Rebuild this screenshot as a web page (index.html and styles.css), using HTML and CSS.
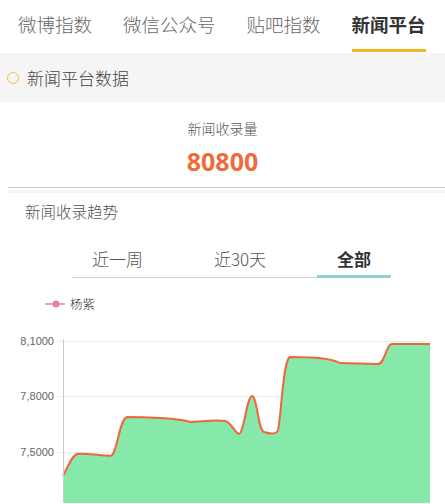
FILE: index.html
```html
<!DOCTYPE html>
<html lang="zh">
<head>
<meta charset="utf-8">
<title>新闻平台</title>
<link rel="stylesheet" href="styles.css">
</head>
<body>
<nav class="tabs">
  <span class="tab">微博指数</span>
  <span class="tab">微信公众号</span>
  <span class="tab">贴吧指数</span>
  <span class="tab active">新闻平台</span>
</nav>
<div class="section-head">
  <span class="ring"></span>
  <span class="section-title">新闻平台数据</span>
</div>
<div class="summary">
  <div class="summary-label">新闻收录量</div>
  <div class="summary-value">80800</div>
</div>
<div class="divider"></div>
<div class="trend-title">新闻收录趋势</div>
<div class="range-tabs">
  <span class="range">近一周</span>
  <span class="range">近30天</span>
  <span class="range active">全部</span>
</div>
<div class="legend">
  <svg class="legend-mark" width="20" height="10" viewBox="0 0 20 10"><line x1="0" y1="5" x2="20" y2="5" stroke="#ec7fa0" stroke-width="1.5"/><circle cx="11" cy="5" r="3.5" fill="#ec7fa0"/></svg>
  <span class="legend-text">杨紫</span>
</div>
<svg class="chart" width="445" height="174" viewBox="0 0 445 174">
  <g stroke="#ececec" stroke-width="1">
    <line x1="57" y1="12.5" x2="430" y2="12.5"/>
    <line x1="57" y1="67.5" x2="430" y2="67.5"/>
    <line x1="57" y1="123.5" x2="430" y2="123.5"/>
  </g>
  <g class="axis-label" font-size="11" fill="#666" text-anchor="end">
    <text x="54" y="16">8,1000</text>
    <text x="54" y="71">7,8000</text>
    <text x="54" y="127">7,5000</text>
  </g>
  <path fill="#86e9a9" d="M63,147 C68,137 72,127 77,125 C85,124 100,126 110,127 C117,128 119,90 127,88 C140,88 180,89 190,93 C200,93 215,90 225,92 C231,93 235,104 239,105 C244,104 247,67 252,67 C257,67 258,101 264,103 C270,105 276,106 278,101 C281,90 283,30 290,28 C300,28 330,28 340,34 C350,34 370,35 378,35 C385,35 386,15 392,15 L430,15 L430,174 L63,174 Z"/>
  <path fill="none" stroke="#f0663c" stroke-width="2" d="M63,147 C68,137 72,127 77,125 C85,124 100,126 110,127 C117,128 119,90 127,88 C140,88 180,89 190,93 C200,93 215,90 225,92 C231,93 235,104 239,105 C244,104 247,67 252,67 C257,67 258,101 264,103 C270,105 276,106 278,101 C281,90 283,30 290,28 C300,28 330,28 340,34 C350,34 370,35 378,35 C385,35 386,15 392,15 L430,15"/>
  <line x1="63.5" y1="10" x2="63.5" y2="174" stroke="#cccccc" stroke-width="1"/>
</svg>
</body>
</html>
```

FILE: styles.css
```css
html, body {
  margin: 0;
  padding: 0;
  background: #ffffff;
}
body {
  width: 445px;
  height: 504px;
  overflow: hidden;
  font-family: "Noto Sans CJK SC", "Noto Sans", sans-serif;
  font-weight: 300;
  color: #555;
}
.tabs {
  display: flex;
  gap: 31px;
  padding-left: 18px;
  height: 53px;
  box-sizing: border-box;
}
.tab {
  font-size: 18.5px;
  line-height: 49px;
  height: 49px;
  color: #666;
  border-bottom: 3px solid transparent;
  white-space: nowrap;
}
.tab.active {
  color: #333;
  font-weight: bold;
  border-bottom-color: #f3b623;
}
.section-head {
  display: flex;
  align-items: center;
  gap: 8px;
  height: 49px;
  padding-left: 7px;
  background: #f5f5f5;
}
.ring {
  width: 12px;
  height: 12px;
  box-sizing: border-box;
  border: 1.5px solid #f2c04e;
  border-radius: 50%;
}
.section-title {
  font-size: 17px;
  color: #444;
  line-height: 24px;
}
.summary {
  display: flex;
  flex-direction: column;
  align-items: center;
  padding: 16px 0 11px;
}
.summary-label {
  font-size: 14px;
  line-height: 20px;
  color: #555;
}
.summary-value {
  margin-top: 8px;
  font-family: "Open Sans", "Noto Sans", sans-serif;
  font-size: 25px;
  font-weight: bold;
  line-height: 30px;
  color: #ee6b3b;
}
.divider {
  margin-left: 8px;
  height: 1px;
  background: #cccccc;
  border-bottom: 2px solid #ffffff;
  box-shadow: 0 3px 0 #f5f5f5;
}
.trend-title {
  margin-top: 10px;
  padding-left: 25px;
  font-size: 15.5px;
  line-height: 22px;
  color: #555;
}
.range-tabs {
  display: flex;
  justify-content: space-between;
  margin: 18px 0 0 72px;
  width: 319px;
  border-bottom: 1px solid #d5d5d5;
}
.range {
  padding: 7px 20px 4px;
  font-size: 17px;
  line-height: 24px;
  color: #555;
  border-bottom: 3px solid transparent;
  margin-bottom: -1px;
  white-space: nowrap;
}
.range.active {
  color: #333;
  font-weight: bold;
  border-bottom-color: #8fd3cf;
}
.legend {
  display: flex;
  align-items: center;
  gap: 5px;
  margin-top: 17px;
  padding-left: 45px;
  height: 18px;
}
.legend-mark {
  display: block;
}
.legend-text {
  font-size: 12.5px;
  line-height: 18px;
  color: #333;
}
.chart {
  display: block;
  margin-top: 16px;
}
.axis-label {
  font-family: "Liberation Sans", Arial, sans-serif;
}
```
